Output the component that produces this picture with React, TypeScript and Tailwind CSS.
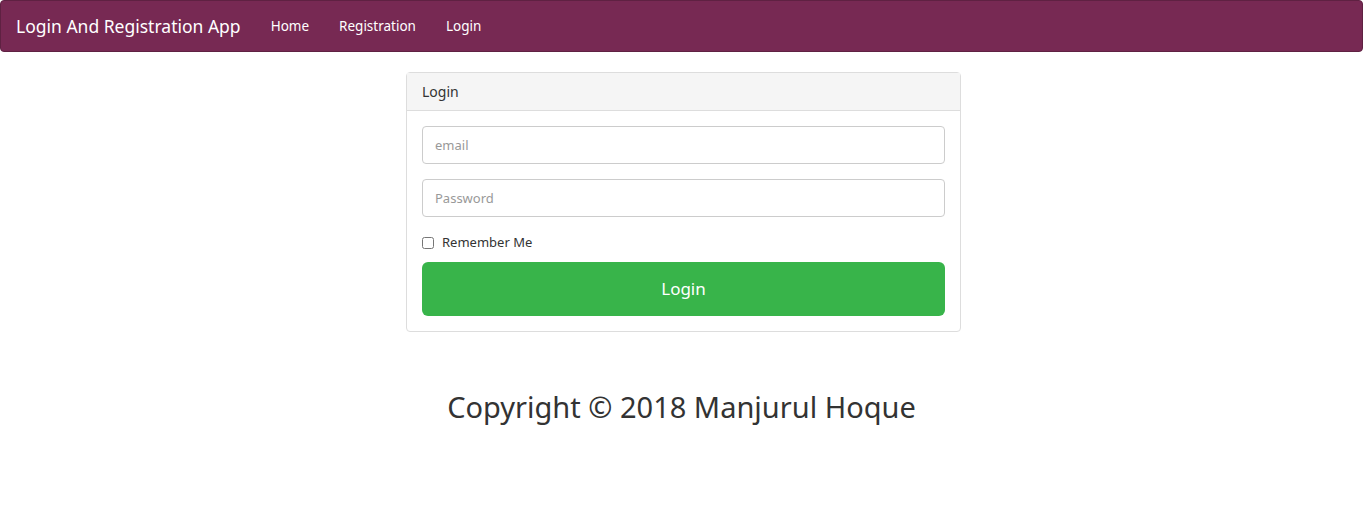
import { useState } from "react";

const font = { fontFamily: '"Noto Sans", "Open Sans", sans-serif' };

const links = ["Home", "Registration", "Login"];

const App = () => {
  const [remember, setRemember] = useState(false);

  return (
    <div className="min-h-[517px] bg-white text-[#333333]" style={font}>
      {/* navbar */}
      <nav className="flex h-[52px] items-center rounded border border-[#5f2142] bg-[#772953] text-white">
        <span className="px-[15px] text-[17.5px]">Login And Registration App</span>
        <ul className="flex">
          {links.map((link) => (
            <li key={link} className="px-[15px] text-[13.5px]">
              {link}
            </li>
          ))}
        </ul>
      </nav>

      {/* login panel */}
      <div className="flex justify-center pl-[4px]">
        <div className="mt-5 w-[555px] rounded border border-[#dddddd]">
          <div className="h-[38px] border-b border-[#dddddd] bg-[#f5f5f5] px-[15px] pt-[8px] text-[14px] text-[#333333]">
            Login
          </div>
          <div className="flex flex-col p-[15px]">
            <input
              className="h-[38px] rounded border border-[#cccccc] px-3 text-[13px] placeholder:text-[#999999] outline-none"
              placeholder="email"
            />
            <input
              type="password"
              className="mt-[15px] h-[38px] rounded border border-[#cccccc] px-3 text-[13px] placeholder:text-[#999999] outline-none"
              placeholder="Password"
            />
            <label className="mt-[16px] flex items-center gap-2 text-[13px]">
              <input
                type="checkbox"
                className="h-[12px] w-[12px]"
                checked={remember}
                onChange={(e) => setRemember(e.target.checked)}
              />
              Remember Me
            </label>
            <button className="mt-[9px] h-[54px] rounded-md bg-[#38b44a] text-[17px] text-white">
              Login
            </button>
          </div>
        </div>
      </div>

      <h2 className="mt-[59px] text-center text-[29px] leading-[1.1]">
        Copyright © 2018 Manjurul Hoque
      </h2>
    </div>
  );
};

export default App;
